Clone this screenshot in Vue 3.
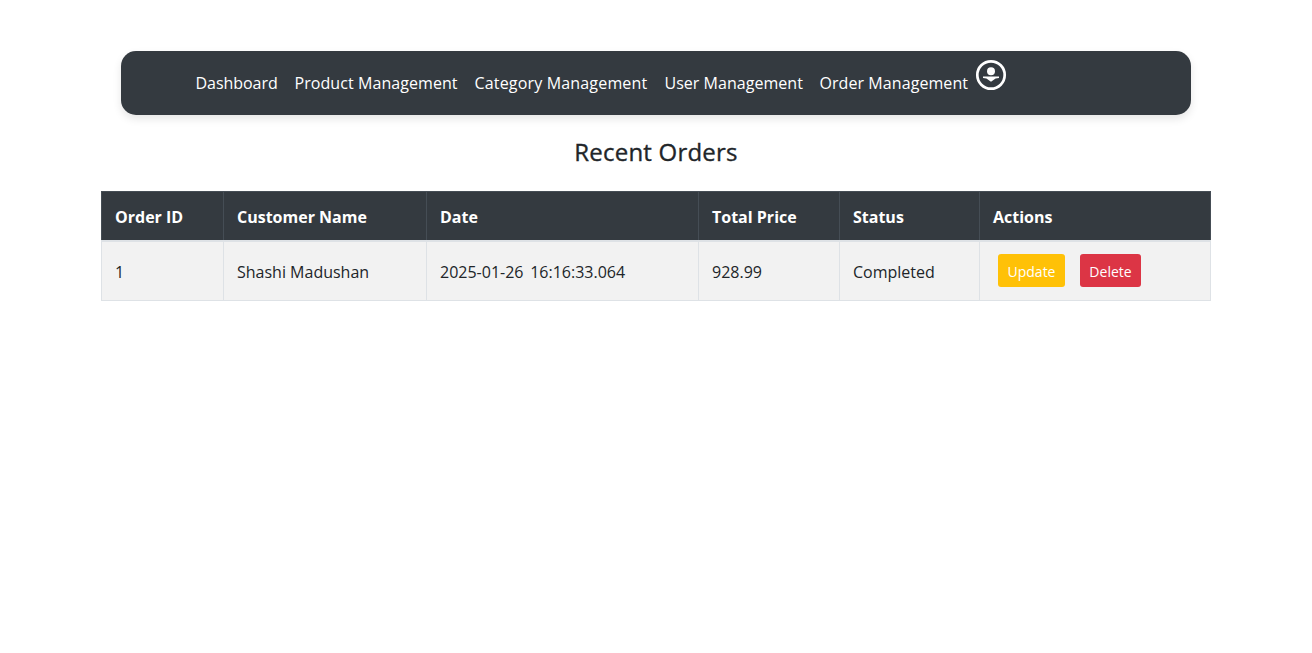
<script setup>
const links = [
  { label: 'Dashboard', cls: 'dash' },
  { label: 'Product Management', cls: 'product' },
  { label: 'Category Management', cls: 'category' },
  { label: 'User Management', cls: 'user' },
  { label: 'Order Management', cls: 'order' },
]
const headers = [
  { label: 'Order ID', cls: 'c-id' },
  { label: 'Customer Name', cls: 'c-name' },
  { label: 'Date', cls: 'c-date' },
  { label: 'Total Price', cls: 'c-price' },
  { label: 'Status', cls: 'c-status' },
  { label: 'Actions', cls: 'c-actions' },
]
const orders = [
  { id: 1, customer: 'Shashi Madushan', date: '2025-01-26 16:16:33.064', total: '928.99', status: 'Completed' },
]
</script>

<template>
  <div class="page">
    <nav class="navbar">
      <a v-for="l in links" :key="l.label" :class="['link', l.cls]">{{ l.label }}</a>
      <svg class="profile" width="32" height="32" viewBox="0 0 32 32">
        <circle cx="16" cy="16" r="13.7" fill="none" stroke="#fff" stroke-width="2.7" />
        <circle cx="16" cy="12.3" r="4" fill="#fff" />
        <path d="M8 17.4H24V18.9L20.6 19.5L16 22.8L11.4 19.5L8 18.9Z" fill="#fff" />
      </svg>
    </nav>
    <h2 class="title">Recent Orders</h2>
    <table class="orders">
      <thead>
        <tr>
          <th v-for="h in headers" :key="h.label" :class="h.cls">{{ h.label }}</th>
        </tr>
      </thead>
      <tbody>
        <tr v-for="o in orders" :key="o.id">
          <td>{{ o.id }}</td>
          <td>{{ o.customer }}</td>
          <td class="v-date">{{ o.date }}</td>
          <td>{{ o.total }}</td>
          <td>{{ o.status }}</td>
          <td class="v-actions">
            <div class="actions">
              <button class="btn update">Update</button>
              <button class="btn delete">Delete</button>
            </div>
          </td>
        </tr>
      </tbody>
    </table>
  </div>
</template>

<style>
body { background: #fff; }
</style>

<style scoped>
.page {
  width: 1110px;
  margin: 0 auto;
  padding-top: 51px;
  font-family: "Segoe UI", "Open Sans", "Noto Sans", sans-serif;
  font-size: 16px;
  color: #212529;
}
.navbar {
  display: flex;
  box-sizing: border-box;
  height: 64px;
  margin: 0 20px;
  padding-left: 74.5px;
  border-radius: 15px;
  background: #343a40;
  box-shadow: 0 4px 8px rgba(0, 0, 0, 0.1);
}
.link {
  flex: none;
  line-height: 64px;
  color: #fff;
  white-space: nowrap;
}
.dash { width: 99px; letter-spacing: -0.05px; }
.product { width: 180px; letter-spacing: 0.07px; }
.category { width: 190px; letter-spacing: 0.17px; }
.user { width: 155px; letter-spacing: 0.03px; }
.order { width: 155.5px; letter-spacing: 0.07px; }
.profile { flex: none; margin-top: 8px; }
.title {
  margin: 20px 0 0;
  height: 56px;
  line-height: 34px;
  font-size: 24px;
  font-weight: 500;
  letter-spacing: 0.2px;
  text-align: center;
  -webkit-text-stroke: 0.35px #212529;
}
.orders {
  width: 1110px;
  table-layout: fixed;
  border-collapse: collapse;
}
th, td {
  box-sizing: border-box;
  padding: 0 13px;
  border: 1px solid #dee2e6;
  text-align: left;
  white-space: nowrap;
}
th {
  height: 49px;
  padding-top: 2px;
  background: #343a40;
  border-color: #454d55;
  border-bottom: 2px solid #dee2e6;
  color: #fff;
  font-weight: 700;
}
td { height: 60px; padding-top: 3px; background: #f2f2f2; }
.c-id { width: 122px; }
.c-name { width: 203px; }
.c-date { width: 272px; }
.c-price { width: 141px; }
.c-status { width: 140px; }
.v-date { word-spacing: 2.5px; }
.v-actions { padding-top: 0; padding-bottom: 1px; }
.actions { display: flex; gap: 15px; padding-left: 5px; }
.btn {
  height: 33px;
  padding: 2px 0 0;
  border: 0;
  border-radius: 3px;
  color: #fff;
  font: 14px/31px "Segoe UI", "Open Sans", "Noto Sans", sans-serif;
}
.update { width: 67px; background: #ffc107; }
.delete { width: 61px; background: #dc3545; }
</style>
